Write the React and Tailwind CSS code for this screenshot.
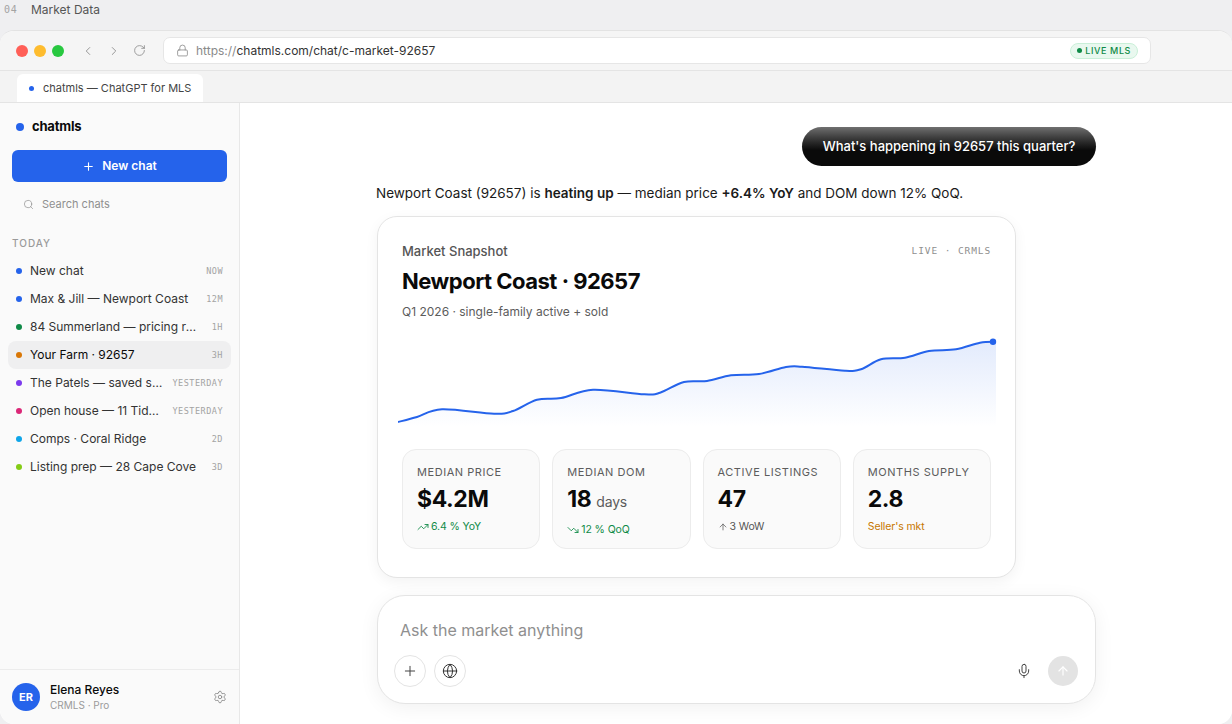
import React from 'react';
import { ArrowUp, ChevronLeft, ChevronRight, Globe, Lock, Mic, Plus, RotateCw, Search, Settings, TrendingDown, TrendingUp } from 'lucide-react';

const chats = [
  { title: 'New chat', time: 'NOW', dot: 'bg-[#2563eb]' },
  { title: 'Max & Jill — Newport Coast', time: '12M', dot: 'bg-[#2563eb]' },
  { title: '84 Summerland — pricing recommendation', time: '1H', dot: 'bg-[#0f8a47]' },
  { title: 'Your Farm · 92657', time: '3H', dot: 'bg-[#d97706]', active: true },
  { title: 'The Patels — saved search', time: 'YESTERDAY', dot: 'bg-[#7c3aed]' },
  { title: 'Open house — 11 Tide Pool', time: 'YESTERDAY', dot: 'bg-[#db2777]' },
  { title: 'Comps · Coral Ridge', time: '2D', dot: 'bg-[#0ea5e9]' },
  { title: 'Listing prep — 28 Cape Cove', time: '3D', dot: 'bg-[#84cc16]' },
];

// traced from the chart, x from the left edge of the svg, y from its top
const points = [
  [0, 85], [19, 80], [44, 72.3], [96, 76.7], [115, 74], [139, 62.7], [163, 61], [195, 52.7],
  [246, 57.3], [262, 55.7], [286, 45], [309, 44], [333, 38.3], [361, 37], [388, 30], [404, 29.7],
  [447, 33.7], [463, 32.3], [483, 22.3], [507, 20.7], [531, 14], [558, 12.3], [582, 5.7], [598, 4.7],
];

const smoothPath = (pts) => {
  let d = `M${pts[0][0]} ${pts[0][1]}`;
  for (let i = 0; i < pts.length - 1; i++) {
    const p0 = pts[Math.max(i - 1, 0)];
    const p1 = pts[i];
    const p2 = pts[i + 1];
    const p3 = pts[Math.min(i + 2, pts.length - 1)];
    const c1 = [p1[0] + (p2[0] - p0[0]) / 6, p1[1] + (p2[1] - p0[1]) / 6];
    const c2 = [p2[0] - (p3[0] - p1[0]) / 6, p2[1] - (p3[1] - p1[1]) / 6];
    d += ` C${c1[0]} ${c1[1]} ${c2[0]} ${c2[1]} ${p2[0]} ${p2[1]}`;
  }
  return d;
};

const Chart = () => {
  const line = smoothPath(points);
  return (
    <svg width="602" height="90" viewBox="0 0 602 90" className="block -ml-[4px]">
      <defs>
        <linearGradient id="chartFill" x1="0" y1="0" x2="0" y2="1">
          <stop offset="0%" stopColor="#2563eb" stopOpacity="0.13" />
          <stop offset="100%" stopColor="#2563eb" stopOpacity="0" />
        </linearGradient>
      </defs>
      <path d={`${line} L598 90 L0 90 Z`} fill="url(#chartFill)" />
      <path d={line} fill="none" stroke="#2563eb" strokeWidth="2" />
      <circle cx="595" cy="4.7" r="3.2" fill="#2563eb" />
    </svg>
  );
};

const Stat = ({ label, value, unit, note, noteColor, icon }) => (
  <div className="h-[100px] rounded-[14px] border border-[#ececec] bg-[#fafafa] pl-[14px] pt-[15px]">
    <div className="text-[11px] leading-[14px] tracking-[0.55px] text-[#5c5c5c]">{label}</div>
    <div className="mt-[5px] flex items-baseline text-[23px] leading-[30px] font-bold tracking-[-0.4px] text-[#0a0a0a]">
      {value}
      {unit && <span className="ml-[5px] text-[14px] font-normal tracking-[-0.2px] text-[#5c5c5c]">{unit}</span>}
    </div>
    <div className={`mt-[6px] flex items-center gap-[2px] text-[10.5px] leading-[14px] tracking-[-0.1px] ${noteColor}`}>
      {icon}
      {note}
    </div>
  </div>
);

const App = () => {
  return (
    <div className="flex h-[724px] w-[1232px] flex-col overflow-hidden bg-[#efeff1] font-['Inter',sans-serif] text-[#0a0a0a]">
      <div className="flex h-[30px] shrink-0 items-start pl-[4px] pt-[2px]">
        <span className="w-[27px] font-['DejaVu_Sans_Mono',monospace] text-[10px] leading-[16px] tracking-[0.8px] text-[#a3a3a3]">04</span>
        <span className="text-[12px] leading-[16px] text-[#555]">Market Data</span>
      </div>

      <div className="flex min-h-0 flex-1 flex-col overflow-hidden rounded-[14px] border-t border-[#e3e3e3] bg-white">
        <div className="flex h-[40px] shrink-0 items-center border-b border-[#e4e4e4] bg-[#f5f5f5] pl-[16px]">
          <div className="flex gap-[6px]">
            <span className="h-[12px] w-[12px] rounded-full bg-[#ff5f57]" />
            <span className="h-[12px] w-[12px] rounded-full bg-[#febc2e]" />
            <span className="h-[12px] w-[12px] rounded-full bg-[#28c840]" />
          </div>
          <div className="ml-[17px] flex items-center gap-[12px] text-[#8a8a8a]">
            <ChevronLeft size={14} strokeWidth={1.5} />
            <ChevronRight size={14} strokeWidth={1.5} />
            <RotateCw size={13} strokeWidth={1.5} />
          </div>
          <div className="ml-[17px] flex h-[27px] w-[988px] items-center rounded-[7px] border border-[#e6e6e6] bg-white pl-[12px] pr-[12px]">
            <Lock size={13} strokeWidth={1.5} className="text-[#8a8a8a]" />
            <span className="ml-[7px] text-[12px] text-[#333]"><span className="text-[#8a8a8a]">https://</span>chatmls.com/chat/c-market-92657</span>
            <span className="ml-auto flex h-[16px] items-center gap-[3px] rounded-full border border-[#c9efd8] bg-[#e9f8ef] px-[6px] text-[9px] font-medium tracking-[0.6px] text-[#0f8a47]">
              <span className="h-[5px] w-[5px] rounded-full bg-[#0f8a47]" />
              LIVE MLS
            </span>
          </div>
        </div>

        <div className="flex h-[32px] shrink-0 items-end border-b border-[#e4e4e4] bg-[#f3f3f3] pl-[17px]">
          <div className="flex h-[28px] w-[186px] items-center rounded-t-[6px] bg-white pl-[12px]">
            <span className="h-[5px] w-[5px] rounded-full bg-[#2563eb]" />
            <span className="ml-[9px] text-[11px] text-[#444]">chatmls — ChatGPT for MLS</span>
          </div>
        </div>

        <div className="flex min-h-0 flex-1">
          <aside className="flex w-[240px] shrink-0 flex-col rounded-bl-[14px] border-r border-[#e8e8e8] bg-[#fafafa]">
            <div className="flex h-[47px] shrink-0 items-center pl-[16px]">
              <span className="h-[8px] w-[8px] rounded-full bg-[#2563eb]" />
              <span className="ml-[8px] text-[13px] font-bold tracking-[-0.2px]">chatmls</span>
            </div>
            <button className="mx-[12px] flex h-[32px] items-center justify-center gap-[7px] rounded-[6px] bg-[#2563eb] text-[12px] font-semibold text-white">
              <Plus size={13} strokeWidth={2} />
              New chat
            </button>
            <div className="mt-[14px] flex items-center pl-[23px] text-[#8f8f8f]">
              <Search size={11} strokeWidth={1.5} />
              <span className="ml-[8px] text-[11px] leading-[16px]">Search chats</span>
            </div>
            <div className="mt-[24px] pl-[12px] text-[10px] leading-[14px] font-medium tracking-[1px] text-[#9a9a9a]">TODAY</div>
            <div className="mt-[7px] flex flex-col px-[8px]">
              {chats.map((chat) => (
                <div key={chat.title} className={`flex h-[28px] items-center rounded-[8px] pl-[8px] pr-[8px] ${chat.active ? 'bg-[#efeff0] text-[#0a0a0a]' : 'text-[#333]'}`}>
                  <span className={`h-[6px] w-[6px] shrink-0 rounded-full ${chat.dot}`} />
                  <span className="ml-[8px] min-w-0 flex-1 truncate text-[12px]">{chat.title}</span>
                  <span className="ml-[10px] shrink-0 font-['DejaVu_Sans_Mono',monospace] text-[8.5px] tracking-[0.5px] text-[#a3a3a3]">{chat.time}</span>
                </div>
              ))}
            </div>
            <div className="mt-auto flex h-[55px] shrink-0 items-center border-t border-[#ececec] pl-[12px] pr-[12px]">
              <span className="flex h-[28px] w-[28px] items-center justify-center rounded-full bg-[#2563eb] text-[11px] font-bold text-white">ER</span>
              <div className="ml-[10px] flex flex-col">
                <span className="text-[12px] leading-[16px] font-medium">Elena Reyes</span>
                <span className="text-[10px] leading-[14px] text-[#9a9a9a]">CRMLS · Pro</span>
              </div>
              <Settings size={14} strokeWidth={1.5} className="ml-auto text-[#8a8a8a]" />
            </div>
          </aside>

          <main className="flex min-w-0 flex-1 flex-col items-center bg-white pt-[24px]">
            <div className="flex w-[720px] flex-col">
              <div className="flex justify-end">
                <div className="flex h-[39px] w-[294px] items-center justify-center rounded-full bg-gradient-to-b from-[#707070] via-[#0a0a0a] via-60% to-[#0a0a0a] text-[13px] font-medium text-white">
                  What's happening in 92657 this quarter?
                </div>
              </div>
              <p className="mt-[17px] text-[13.5px] leading-[20px] text-[#1a1a1a]">
                Newport Coast (92657) is <strong className="font-semibold">heating up</strong> — median price <strong className="font-semibold">+6.4% YoY</strong> and DOM down 12% QoQ.
              </p>
              <section className="mt-[13px] ml-[1px] h-[362px] w-[639px] rounded-[20px] border border-[#e4e4e4] bg-white px-[24px] pt-[24px] shadow-[0_4px_14px_rgba(0,0,0,0.05)]">
                <div className="flex items-center justify-between">
                  <span className="text-[13px] leading-[20px] font-medium text-[#555]">Market Snapshot</span>
                  <span className="font-['DejaVu_Sans_Mono',monospace] text-[9.5px] tracking-[0.9px] text-[#8f8f8f]">LIVE · CRMLS</span>
                </div>
                <h2 className="mt-[5px] text-[22px] leading-[30px] font-bold tracking-[-0.5px]">Newport Coast · 92657</h2>
                <div className="mt-[7px] text-[12px] leading-[18px] text-[#5c5c5c]">Q1 2026 · single-family active + sold</div>
                <div className="mt-[16px]">
                  <Chart />
                </div>
                <div className="mt-[22px] grid grid-cols-4 gap-[12px]">
                  <Stat label="MEDIAN PRICE" value="$4.2M" note="6.4 % YoY" noteColor="text-[#0f8a47]" icon={<TrendingUp size={12} strokeWidth={1.75} />} />
                  <Stat label="MEDIAN DOM" value="18" unit="days" note="12 % QoQ" noteColor="text-[#0f8a47]" icon={<TrendingDown size={12} strokeWidth={1.75} />} />
                  <Stat label="ACTIVE LISTINGS" value="47" note="3 WoW" noteColor="text-[#555]" icon={<ArrowUp size={10} strokeWidth={1.75} />} />
                  <Stat label="MONTHS SUPPLY" value="2.8" note="Seller's mkt" noteColor="text-[#c77700]" />
                </div>
              </section>
              <div className="mt-[17px] ml-[1px] h-[109px] w-[719px] rounded-[28px] border border-[#e4e4e4] bg-white pl-[16px] pr-[17px] pt-[24px] shadow-[0_4px_20px_rgba(0,0,0,0.06)]">
                <div className="pl-[6px] text-[16px] leading-[20px] text-[#8f8f8f]">Ask the market anything</div>
                <div className="mt-[15px] flex items-center">
                  <span className="flex h-[32px] w-[32px] items-center justify-center rounded-full border border-[#e4e4e4] text-[#444]"><Plus size={16} strokeWidth={1.5} /></span>
                  <span className="ml-[8px] flex h-[32px] w-[32px] items-center justify-center rounded-full border border-[#e4e4e4] text-[#333]"><Globe size={16} strokeWidth={1.5} /></span>
                  <Mic size={16} strokeWidth={1.5} className="ml-auto text-[#444]" />
                  <span className="ml-[16px] flex h-[30px] w-[30px] items-center justify-center rounded-full bg-[#e3e3e3] text-white"><ArrowUp size={14} strokeWidth={2} /></span>
                </div>
              </div>
            </div>
          </main>
        </div>
      </div>
    </div>
  );
};

export default App;
